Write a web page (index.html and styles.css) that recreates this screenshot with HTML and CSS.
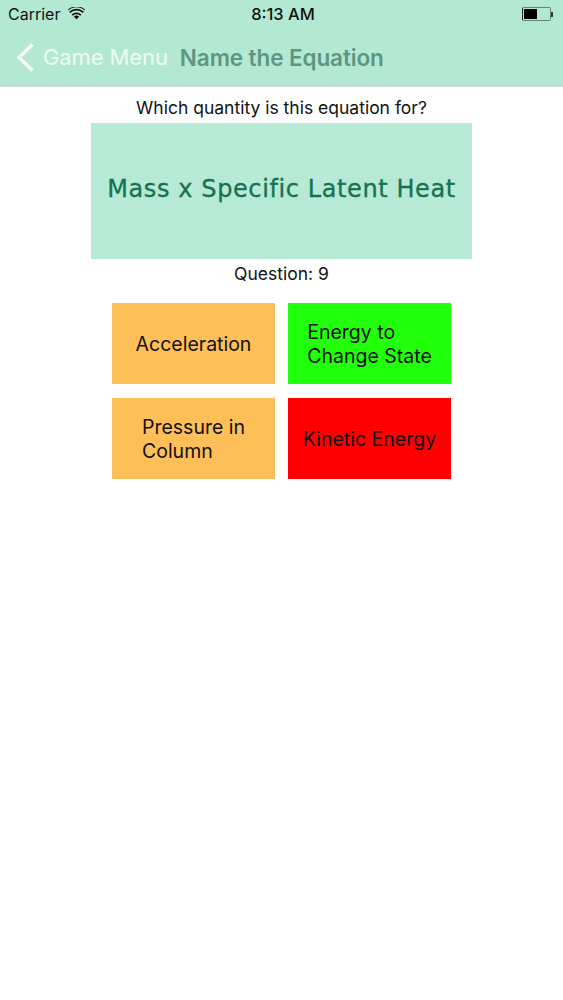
FILE: index.html
```html
<!DOCTYPE html>
<html lang="en">
<head>
  <meta charset="UTF-8">
  <meta name="viewport" content="width=device-width, initial-scale=1.0">
  <title>Name the Equation</title>
  <link rel="stylesheet" href="styles.css">
</head>
<body>
  <header class="top">
    <div class="status">
      <div class="status-left">
        <span>Carrier</span>
        <svg class="wifi" width="17" height="13" viewBox="0 0 17 13">
          <path d="M8.5 12.5 L5.9 9.6 A4 4 0 0 1 11.1 9.6 Z" fill="#111"/>
          <path d="M3.6 7.4 A7.2 7.2 0 0 1 13.4 7.4 L12.2 8.7 A5.4 5.4 0 0 0 4.8 8.7 Z" fill="#111"/>
          <path d="M1.1 4.7 A10.8 10.8 0 0 1 15.9 4.7 L14.7 6 A9 9 0 0 0 2.3 6 Z" fill="#111"/>
          <path d="M0 2.6 A12.6 12.6 0 0 1 17 2.6 L16.5 3.4 A11.6 11.6 0 0 0 .5 3.4 Z" fill="#111"/>
        </svg>
      </div>
      <div class="status-time">8:13 AM</div>
      <div class="battery">
        <div class="battery-body"><div class="battery-level"></div></div>
        <div class="battery-tip"></div>
      </div>
    </div>
    <nav class="nav">
      <svg class="chevron" width="20" height="29" viewBox="0 0 20 29">
        <path d="M17.5 1.5 L4 14.5 L17.5 27.5" fill="none" stroke="#f4fbf7" stroke-width="3.6"/>
      </svg>
      <span class="back">Game Menu</span>
      <span class="title">Name the Equation</span>
    </nav>
  </header>

  <main class="content">
    <p class="prompt">Which quantity is this equation for?</p>
    <div class="equation">Mass x Specific Latent Heat</div>
    <p class="count">Question: 9</p>
    <div class="answers">
      <div class="answer orange"><span class="label">Acceleration</span></div>
      <div class="answer green"><span class="label">Energy to<br>Change State</span></div>
      <div class="answer orange"><span class="label">Pressure in<br>Column</span></div>
      <div class="answer red"><span class="label">Kinetic Energy</span></div>
    </div>
  </main>
</body>
</html>
```

FILE: styles.css
```css
* {
  box-sizing: border-box;
}

body {
  margin: 0;
  background-color: #fff;
  color: #111;
  font-family: Inter, "Liberation Sans", sans-serif;
}

p {
  margin: 0;
}

.top {
  height: 87px;
  background-color: #b3e9d2;
  border-bottom: 1px solid #cfdcd6;
}

.status {
  display: grid;
  grid-template-columns: 1fr auto 1fr;
  align-items: center;
  height: 28px;
  padding: 0 10px 0 8px;
  font-size: 16px;
}

.status-left {
  display: flex;
  align-items: center;
  gap: 8px;
}

.wifi {
  margin-top: -1px;
}

.status-time {
  margin-left: 5px;
  font-size: 16.5px;
  font-weight: 500;
}

.battery {
  display: flex;
  align-items: center;
  justify-content: flex-end;
}

.battery-body {
  width: 29px;
  height: 14px;
  padding: 1px;
  border: 1px solid #5d8a76;
  border-left-color: #222;
  border-radius: 2px;
}

.battery-level {
  width: 13px;
  height: 100%;
  background-color: #000;
}

.battery-tip {
  width: 2px;
  height: 5px;
  background-color: #333;
}

.nav {
  display: flex;
  align-items: center;
  height: 58px;
  padding-left: 15px;
}

.chevron {
  flex: none;
}

.back {
  margin-left: 8px;
  color: #eefaf4;
  font-size: 22px;
  letter-spacing: -0.1px;
}

.title {
  margin-left: 12px;
  color: #5f9682;
  font-size: 22.5px;
  font-weight: 600;
  letter-spacing: -0.1px;
}

.content {
  display: flex;
  flex-direction: column;
  align-items: center;
  padding-top: 9px;
}

.prompt,
.count {
  font-size: 17.5px;
  line-height: 24px;
}

.equation {
  display: flex;
  align-items: center;
  justify-content: center;
  width: 381px;
  height: 136px;
  margin-top: 3px;
  padding-bottom: 5px;
  background-color: #b7e9d7;
  color: #14734f;
  font-family: "DejaVu Sans", sans-serif;
  font-size: 24px;
  letter-spacing: 0.6px;
  -webkit-text-stroke: 0.3px #14734f;
  white-space: nowrap;
}

.count {
  margin-top: 3px;
}

.answers {
  display: grid;
  grid-template-columns: 163px 163px;
  grid-auto-rows: 81px;
  gap: 14px 13px;
  margin-top: 17px;
}

.answer {
  display: flex;
  align-items: center;
  justify-content: center;
  font-size: 19.5px;
  line-height: 24px;
}

.orange {
  background-color: #febe58;
}

.green {
  background-color: #22ff0b;
}

.red {
  background-color: #ff0000;
}
```
